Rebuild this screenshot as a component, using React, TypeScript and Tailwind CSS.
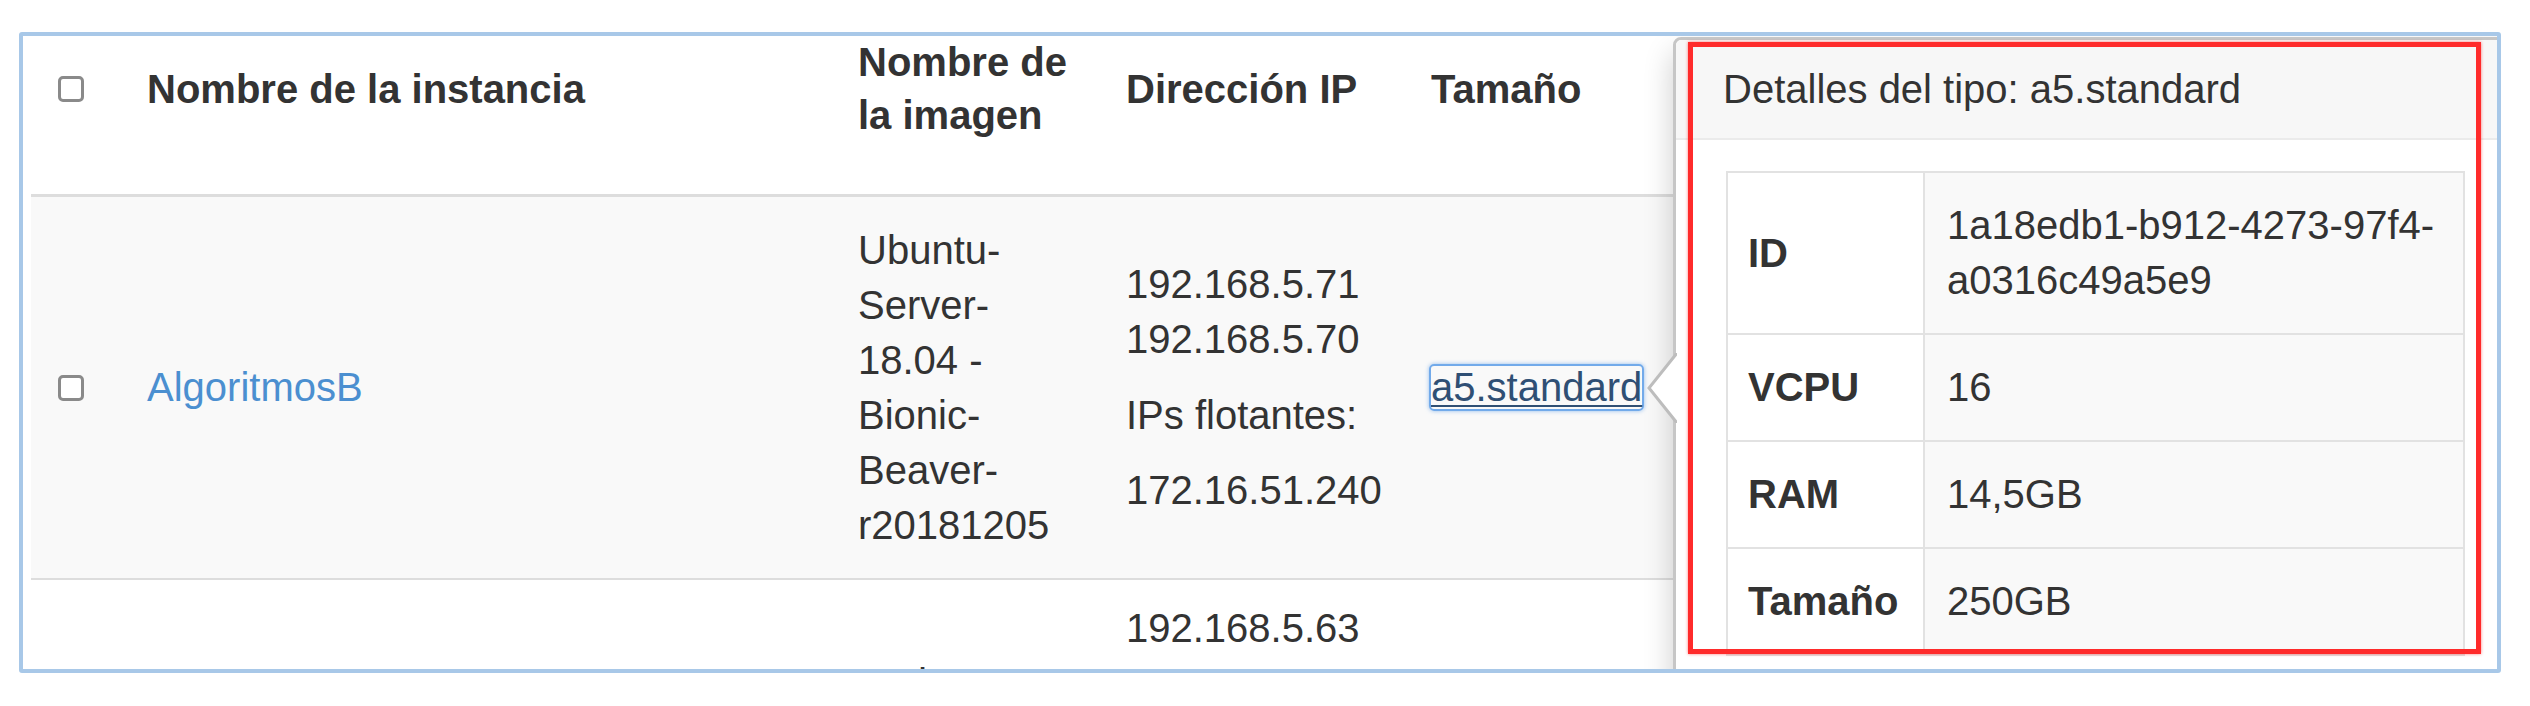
import React from "react";

const Checkbox = () => (
  <div className="w-[26px] h-[26px] border-[3px] border-[#8a8a8a] rounded-[5px] bg-white" />
);

export default function App() {
  return (
    <div className="relative w-[2530px] h-[706px] bg-white font-['Liberation_Sans',Arial,sans-serif] text-[40px] leading-[55px] text-[#333]">
      <div className="pt-[32px] pl-[19px]">
        <div className="relative w-[2482px] h-[641px] border-[4px] border-[#a8c8e8] rounded-[3px] overflow-hidden bg-white">
          <div className="ml-[8px]">
            {/* Header */}
            <div className="flex h-[161px] items-start border-b-[3px] border-[#dddddd] font-bold">
              <div className="w-[100px] h-[106px] flex items-center pl-[27px]">
                <Checkbox />
              </div>
              <div className="w-[711px] h-[106px] flex items-center pl-[16px] leading-[53px]">
                Nombre de la instancia
              </div>
              <div className="w-[268px] h-[106px] flex items-center pl-[16px] leading-[53px]">
                <div>
                  Nombre de
                  <br />
                  la imagen
                </div>
              </div>
              <div className="w-[305px] h-[106px] flex items-center pl-[16px] leading-[53px]">
                Dirección IP
              </div>
              <div className="flex-1 h-[106px] flex items-center pl-[16px] leading-[53px]">
                Tamaño
              </div>
            </div>

            {/* Row 1 */}
            <div className="flex h-[383px] items-center bg-[#f9f9f9] border-b-[2px] border-[#dddddd]">
              <div className="w-[100px] flex items-center pl-[27px]">
                <Checkbox />
              </div>
              <div className="w-[711px] pl-[16px]">
                <a className="text-[#4b8fd0]">AlgoritmosB</a>
              </div>
              <div className="w-[268px] pl-[16px]">
                Ubuntu-
                <br />
                Server-
                <br />
                18.04 -
                <br />
                Bionic-
                <br />
                Beaver-
                <br />
                r20181205
              </div>
              <div className="w-[305px] pl-[16px]">
                <div>192.168.5.71</div>
                <div>192.168.5.70</div>
                <div className="mt-[21px]">IPs flotantes:</div>
                <div className="mt-[20px]">172.16.51.240</div>
              </div>
              <div className="flex-1 pl-[14px]">
                <a className="inline-block leading-[43px] text-[#2f4f74] underline decoration-[2px] underline-offset-[4px] border-[2px] border-[#72aaea] rounded-[5px] shadow-[0_0_4px_rgba(80,150,230,0.6)]">
                  a5.standard
                </a>
              </div>
            </div>

            {/* Row 2 */}
            <div className="flex h-[200px] items-start bg-white">
              <div className="w-[100px]" />
              <div className="w-[711px]" />
              <div className="w-[268px] pl-[16px] pt-[76px]">Fedora-</div>
              <div className="w-[305px] pl-[16px] pt-[21px]">
                <div>192.168.5.63</div>
              </div>
              <div className="flex-1" />
            </div>
          </div>

          {/* Popover */}
          <div className="absolute left-[1650px] top-[1px] w-[860px] h-[720px] bg-white border-[3px] border-[#c6c6c6] rounded-[8px] shadow-[0_15px_30px_rgba(0,0,0,0.2)]">
            <svg
              className="absolute left-[-30px] top-[313px]"
              width="31"
              height="70"
              viewBox="0 0 31 70"
            >
              <polygon points="31,0 3,35 31,70" fill="#ffffff" />
              <polyline
                points="31,0 3,35 31,70"
                fill="none"
                stroke="#bdbdbd"
                strokeWidth="3"
              />
            </svg>
            <div className="h-[100px] flex items-center pl-[47px] bg-[#f7f7f7] border-b-[2px] border-[#ebebeb] rounded-t-[6px]">
              Detalles del tipo: a5.standard
            </div>
            <div className="pt-[31px] pl-[50px]">
              <div className="w-[739px] border-[2px] border-[#e2e2e2]">
                <div className="flex">
                  <div className="w-[197px] flex items-center pl-[20px] font-bold bg-white border-r-[2px] border-[#e2e2e2]">
                    ID
                  </div>
                  <div className="flex-1 py-[25px] pl-[22px] bg-[#f9f9f9]">
                    1a18edb1-b912-4273-97f4-
                    <br />
                    a0316c49a5e9
                  </div>
                </div>
                <div className="flex border-t-[2px] border-[#e2e2e2]">
                  <div className="w-[197px] flex items-center pl-[20px] font-bold bg-white border-r-[2px] border-[#e2e2e2]">
                    VCPU
                  </div>
                  <div className="flex-1 py-[25px] pl-[22px] bg-[#f9f9f9]">16</div>
                </div>
                <div className="flex border-t-[2px] border-[#e2e2e2]">
                  <div className="w-[197px] flex items-center pl-[20px] font-bold bg-white border-r-[2px] border-[#e2e2e2]">
                    RAM
                  </div>
                  <div className="flex-1 py-[25px] pl-[22px] bg-[#f9f9f9]">14,5GB</div>
                </div>
                <div className="flex border-t-[2px] border-[#e2e2e2]">
                  <div className="w-[197px] flex items-center pl-[20px] font-bold bg-white border-r-[2px] border-[#e2e2e2]">
                    Tamaño
                  </div>
                  <div className="flex-1 py-[25px] pl-[22px] bg-[#f9f9f9]">250GB</div>
                </div>
              </div>
            </div>
          </div>
        </div>
      </div>

      {/* Red annotation box */}
      <div className="absolute left-[1688px] top-[42px] w-[793px] h-[612px] border-[5px] border-[#ff2b2b] shadow-[0_0_3px_rgba(255,0,0,0.5)]" />
    </div>
  );
}
